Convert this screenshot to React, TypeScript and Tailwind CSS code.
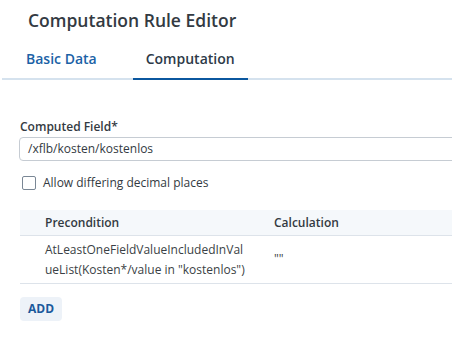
export default function App(): React.JSX.Element {
  return (
    <div
      className="w-[452px] h-[338px] overflow-hidden bg-white text-[#3b3b3b]"
      style={{ fontFamily: '"Open Sans", "Noto Sans", sans-serif' }}
    >
      <div className="w-[480px]">
        <h1 className="pl-[28px] pt-[7px] h-[40px] text-[17.5px] leading-[26px] font-semibold text-[#333a42]">
          Computation Rule Editor
        </h1>

        <div className="ml-[2px] flex border-b-2 border-[#d5e2ee] h-[40px]">
          <button className="px-[24px] text-[14px] font-semibold text-[#1b62a6] leading-[36px]">
            Basic Data
          </button>
          <button className="ml-[12px] px-[13px] text-[14px] font-semibold text-[#2d3a48] leading-[36px] border-b-2 border-[#0b579f] -mb-[2px]">
            Computation
          </button>
        </div>

        <div className="pl-[20px] pt-[38px]">
          <label className="block text-[12px] font-semibold text-[#333a42] leading-[18px]">
            Computed Field*
          </label>
          <div className="mt-[1px] ml-[-1px] h-[24px] border border-[#c6ccd3] rounded-l-[4px] flex items-center pl-[8px] text-[12px] text-[#333a42]">
            /xflb/kosten/kostenlos
          </div>

          <div className="mt-[13px] ml-[2px] flex items-center gap-[7px]">
            <span className="w-[14px] h-[14px] border border-[#7a8795] rounded-[2px] bg-white" />
            <span className="text-[12px] text-[#333a42] leading-[18px]">
              Allow differing decimal places
            </span>
          </div>

          <div className="mt-[18px]">
            <div className="flex h-[26px] items-center bg-[#f5f8fb] border-b border-[#dde3ea] text-[12px] font-semibold text-[#333a42]">
              <div className="w-[254px] pl-[25px]">Precondition</div>
              <div>Calculation</div>
            </div>
            <div className="flex items-center h-[48px] border-b border-[#dde3ea] text-[12px] text-[#3a3f45]">
              <div className="w-[254px] pl-[25px] leading-[20px] whitespace-nowrap">
                <span className="block">AtLeastOneFieldValueIncludedInVal</span>
                <span className="block">ueList(Kosten*/value in "kostenlos")</span>
              </div>
              <div className="leading-[20px] -mt-[2px]">""</div>
            </div>
          </div>

          <button className="mt-[13px] h-[24px] px-[8px] rounded-[4px] bg-[#edf2f8] text-[12px] font-bold text-[#1b5a9c]">
            ADD
          </button>
        </div>
      </div>
    </div>
  );
}
